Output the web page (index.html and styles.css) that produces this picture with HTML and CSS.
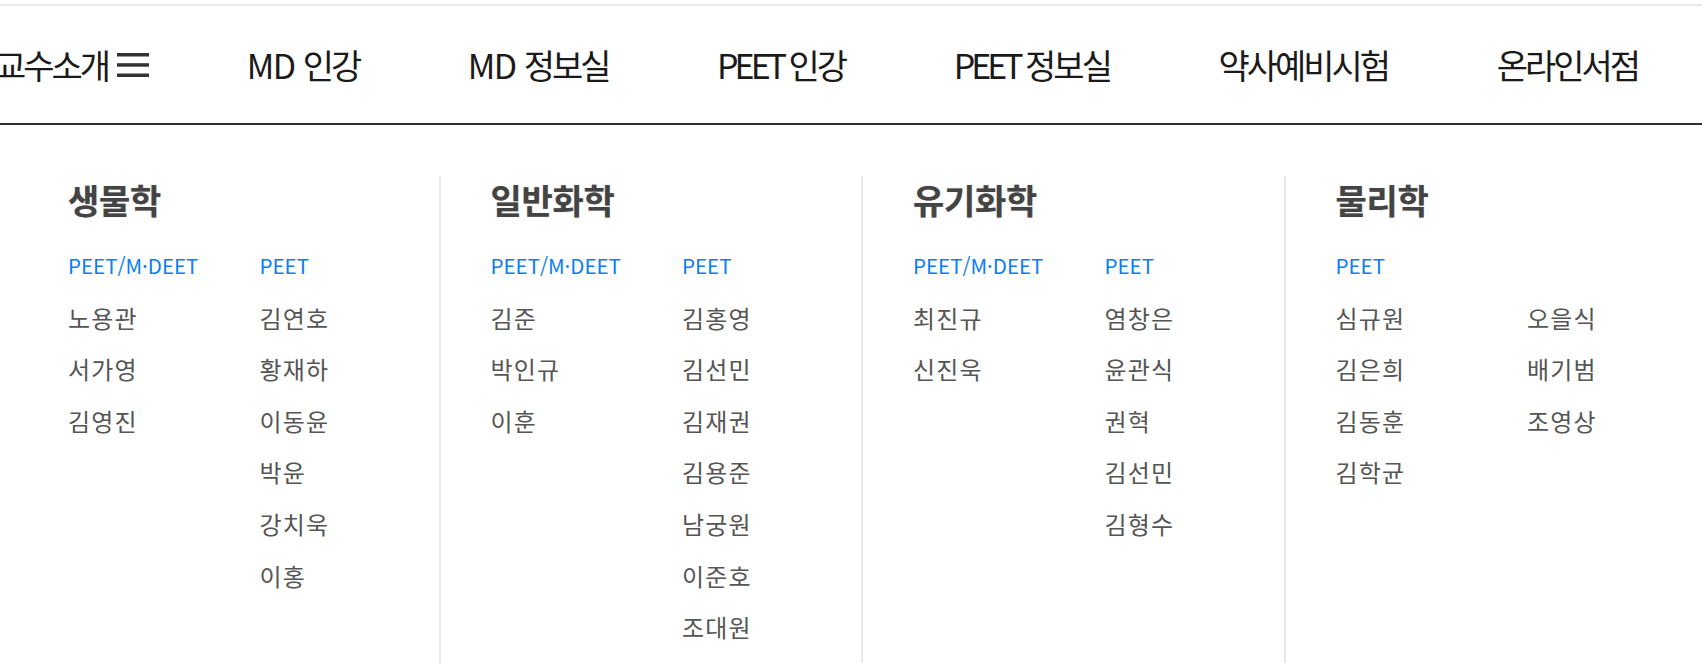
FILE: index.html
```html
<!DOCTYPE html>
<html lang="ko">
<head>
<meta charset="utf-8">
<title>교수소개</title>
<link rel="stylesheet" href="styles.css">
</head>
<body>
<header class="gnb">
  <nav class="menu">
    <a class="menu-item menu-first" href="#">교수소개<svg class="burger" width="32" height="24" viewBox="0 0 32 24"><rect x="0" y="0" width="32" height="3.5" fill="#333"/><rect x="0" y="10.2" width="32" height="3.5" fill="#333"/><rect x="0" y="20.5" width="32" height="3.5" fill="#333"/></svg></a>
    <a class="menu-item" href="#"><span class="md">MD </span>인강</a>
    <a class="menu-item" href="#"><span class="md">MD </span>정보실</a>
    <a class="menu-item" href="#"><span class="peet">PEET </span>인강</a>
    <a class="menu-item" href="#"><span class="peet">PEET </span>정보실</a>
    <a class="menu-item" href="#">약사예비시험</a>
    <a class="menu-item" href="#">온라인서점</a>
  </nav>
</header>
<section class="mega">
  <div class="col col-first">
    <h3 class="subject">생물학</h3>
    <div class="groups">
      <ul class="group">
        <li class="tag">PEET/M·DEET</li>
        <li>노용관</li><li>서가영</li><li>김영진</li>
      </ul>
      <ul class="group">
        <li class="tag">PEET</li>
        <li>김연호</li><li>황재하</li><li>이동윤</li><li>박윤</li><li>강치욱</li><li>이홍</li>
      </ul>
    </div>
  </div>
  <div class="col">
    <h3 class="subject">일반화학</h3>
    <div class="groups">
      <ul class="group">
        <li class="tag">PEET/M·DEET</li>
        <li>김준</li><li>박인규</li><li>이훈</li>
      </ul>
      <ul class="group">
        <li class="tag">PEET</li>
        <li>김홍영</li><li>김선민</li><li>김재권</li><li>김용준</li><li>남궁원</li><li>이준호</li><li>조대원</li>
      </ul>
    </div>
  </div>
  <div class="col">
    <h3 class="subject">유기화학</h3>
    <div class="groups">
      <ul class="group">
        <li class="tag">PEET/M·DEET</li>
        <li>최진규</li><li>신진욱</li>
      </ul>
      <ul class="group">
        <li class="tag">PEET</li>
        <li>염창은</li><li>윤관식</li><li>권혁</li><li>김선민</li><li>김형수</li>
      </ul>
    </div>
  </div>
  <div class="col">
    <h3 class="subject">물리학</h3>
    <div class="groups">
      <ul class="group">
        <li class="tag">PEET</li>
        <li>심규원</li><li>김은희</li><li>김동훈</li><li>김학균</li>
      </ul>
      <ul class="group">
        <li class="tag tag-empty">&nbsp;</li>
        <li>오을식</li><li>배기범</li><li>조영상</li>
      </ul>
    </div>
  </div>
</section>
</body>
</html>
```

FILE: styles.css
```css
html, body {
  margin: 0;
  padding: 0;
  background: #fff;
  overflow: hidden;
}
body {
  font-family: "Noto Sans CJK KR", "Noto Sans", sans-serif;
  color: #333;
}
.gnb {
  margin-top: 4px;
  border-top: 2px solid #e8e8e8;
  border-bottom: 2px solid #2e2e2e;
}
.menu {
  display: flex;
  align-items: center;
  height: 117px;
  gap: 108.5px;
  margin-left: -5px;
}
.menu-item {
  display: flex;
  align-items: center;
  font-size: 34px;
  font-weight: 400;
  letter-spacing: -3px;
  color: #1a1a1a;
  text-decoration: none;
  white-space: pre;
}
.menu-item .md {
  letter-spacing: -1.5px;
}
.menu-item .peet {
  letter-spacing: -4px;
}
.menu-first {
  margin-right: -11px;
}
.burger {
  margin-left: 9px;
  display: block;
}
.mega {
  display: flex;
  padding-top: 51px;
  margin-left: 16px;
}
.col {
  width: 422.5px;
  flex: none;
  box-sizing: border-box;
  border-left: 2px solid #e8e8e8;
  padding-left: 50px;
  height: 500px;
}
.col-first {
  border-left-color: transparent;
}
.subject {
  margin: 0 0 16px;
  font-size: 34px;
  line-height: 48px;
  font-weight: 700;
  color: #444;
  letter-spacing: -0.3px;
  text-shadow: 0 0 1px rgba(68, 68, 68, 0.45);
}
.groups {
  display: flex;
}
.group {
  list-style: none;
  margin: 0;
  padding: 0;
  width: 191.5px;
  flex: none;
}
.group li {
  line-height: 51.6px;
  font-size: 24px;
  letter-spacing: 1.2px;
  color: #555;
  white-space: nowrap;
}
.group .tag {
  font-size: 20.5px;
  letter-spacing: 0;
  color: #0a7df7;
}
```
